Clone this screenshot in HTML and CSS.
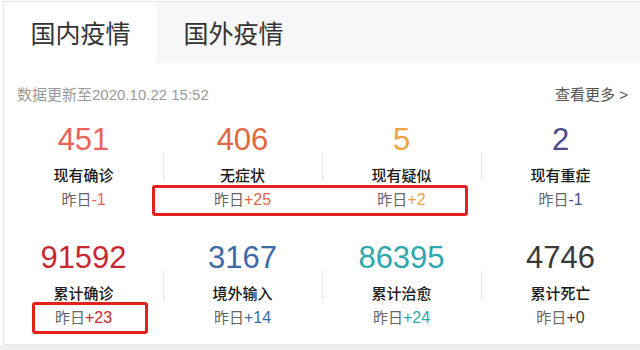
FILE: index.html
```html
<!DOCTYPE html>
<html lang="zh-CN">
<head>
  <meta charset="UTF-8" />
  <title>疫情数据</title>
  <link rel="stylesheet" href="styles.css">
</head>
<body>
  <div class="panel">
    <div class="tabs">
      <div class="tab active">国内疫情</div>
      <div class="tab">国外疫情</div>
    </div>

    <div class="update">
      <span class="time">数据更新至2020.10.22 15:52</span>
      <a class="more" href="#">查看更多 &gt;</a>
    </div>

    <div class="grid">
      <div class="cell">
        <div class="num c-confirm">451</div>
        <div class="label">现有确诊</div>
        <div class="diff">昨日<b class="c-confirm">-1</b></div>
      </div>
      <div class="cell line">
        <div class="num c-nosym">406</div>
        <div class="label">无症状</div>
        <div class="diff">昨日<b class="c-nosym">+25</b></div>
      </div>
      <div class="cell line">
        <div class="num c-suspect">5</div>
        <div class="label">现有疑似</div>
        <div class="diff">昨日<b class="c-suspect">+2</b></div>
      </div>
      <div class="cell line">
        <div class="num c-severe">2</div>
        <div class="label">现有重症</div>
        <div class="diff">昨日<b class="c-severe">-1</b></div>
      </div>

      <div class="cell">
        <div class="num c-total">91592</div>
        <div class="label">累计确诊</div>
        <div class="diff">昨日<b class="c-total">+23</b></div>
      </div>
      <div class="cell line">
        <div class="num c-import">3167</div>
        <div class="label">境外输入</div>
        <div class="diff">昨日<b class="c-import">+14</b></div>
      </div>
      <div class="cell line">
        <div class="num c-cured">86395</div>
        <div class="label">累计治愈</div>
        <div class="diff">昨日<b class="c-cured">+24</b></div>
      </div>
      <div class="cell line">
        <div class="num c-dead">4746</div>
        <div class="label">累计死亡</div>
        <div class="diff">昨日<b class="c-dead">+0</b></div>
      </div>
    </div>

    <div class="mark mark-1"></div>
    <div class="mark mark-2"></div>
  </div>
  <div class="bottom"></div>
</body>
</html>
```

FILE: styles.css
```css
body {
  margin: 0;
  background: #fff;
  font-family: "Liberation Sans", "Noto Sans CJK SC", sans-serif;
  color: #333;
}

.panel {
  position: relative;
  margin: 1px 0 0 3px;
  height: 344px;
  border: 1px solid #e6e6e6;
  border-right: none;
  box-sizing: border-box;
  overflow: hidden;
}

.tabs {
  display: flex;
  height: 61px;
  background: #f7f7f9;
}

.tab {
  width: 153px;
  line-height: 61px;
  text-align: center;
  font-family: "Noto Sans CJK SC", sans-serif;
  font-size: 25px;
  color: #333;
}

.tab.active {
  background: #fff;
}

.update {
  display: flex;
  justify-content: space-between;
  padding: 20px 12px 0 13px;
  line-height: 24px;
  font-size: 15px;
}

.time {
  color: #9a9a9a;
}

.more {
  color: #555;
  text-decoration: none;
}

.grid {
  display: grid;
  grid-template-columns: repeat(4, 159px);
  row-gap: 17px;
  margin-top: 7px;
}

.cell {
  text-align: center;
}

.cell.line {
  background: linear-gradient(#e8e8e8, #e8e8e8) left 38px / 1px 29px no-repeat;
}

.num {
  font-size: 31px;
  line-height: 52px;
}

.label {
  font-family: "Noto Sans CJK SC", sans-serif;
  font-size: 15px;
  font-weight: 500;
  line-height: 18px;
  color: #1a1a1a;
}

.diff {
  font-family: "Noto Sans CJK SC", sans-serif;
  font-size: 15px;
  line-height: 30px;
  color: #666;
}

.diff b {
  font-family: "Liberation Sans", sans-serif;
  font-size: 16px;
  font-weight: normal;
}

.c-confirm { color: #e8645a; }
.c-nosym { color: #e1683f; }
.c-suspect { color: #f0a23a; }
.c-severe { color: #4c4b8f; }
.c-total { color: #c8282f; }
.c-import { color: #3d6ba8; }
.c-cured { color: #2ea8ae; }
.c-dead { color: #3a3a3a; }

.mark {
  position: absolute;
  border: 3px solid #e3201c;
  border-radius: 3px;
  box-sizing: border-box;
}

.mark-1 {
  left: 148px;
  top: 183px;
  width: 316px;
  height: 31px;
}

.mark-2 {
  left: 28px;
  top: 300px;
  width: 116px;
  height: 32px;
}

.bottom {
  height: 10px;
  background: #efefef;
}
```
